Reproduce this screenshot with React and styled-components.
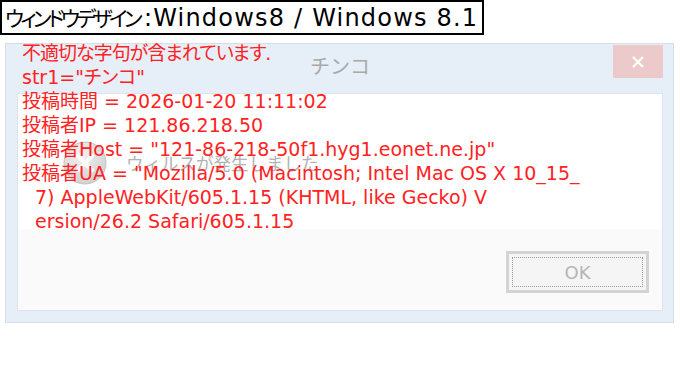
import React from "react";
import styled, { createGlobalStyle } from "styled-components";

const GlobalStyle = createGlobalStyle`
  html, body { margin: 0; padding: 0; background: #ffffff; }
  body { font-family: "DejaVu Sans", "Noto Sans CJK JP", sans-serif; }
`;

const Page = styled.div`
  position: relative;
  width: 680px;
  height: 368px;
  overflow: hidden;
`;

const Label = styled.div`
  display: inline-flex;
  align-items: center;
  box-sizing: border-box;
  height: 35px;
  padding: 0 4px 0 3px;
  border: 2px solid #000;
  font-family: "DejaVu Sans", "Noto Sans CJK JP", sans-serif;
  font-size: 24px;
  line-height: 1;
  color: #000;
  white-space: nowrap;
`;

const Kana = styled.span`
  font-family: "Noto Sans CJK JP", sans-serif;
  font-size: 21px;
  font-feature-settings: "palt";
  letter-spacing: -3.6px;
  margin-right: 5px;
`;

const Latin = styled.span`
  letter-spacing: 1.2px;
`;

const Dialog = styled.div`
  box-sizing: border-box;
  margin: 8px 0 0 5px;
  width: 669px;
  height: 280px;
  background: #e6eef8;
  border: 1px solid #d5dde7;
  padding: 0 10px 11px 11px;
  display: flex;
  flex-direction: column;
`;

const TitleBar = styled.div`
  height: 49px;
  display: grid;
  grid-template-columns: 1fr auto 1fr;
  align-items: start;
`;

const Title = styled.div`
  grid-column: 2;
  margin-top: 12px;
  font-family: "Noto Sans CJK JP", sans-serif;
  font-size: 20px;
  color: #a9a9a9;
  line-height: 1;
`;

const CloseButton = styled.div`
  grid-column: 3;
  justify-self: end;
  margin-top: 1px;
  width: 50px;
  height: 33px;
  background: #ecc9ca;
  display: flex;
  align-items: center;
  justify-content: center;
`;

const Body = styled.div`
  flex: 1;
  display: flex;
  flex-direction: column;
  background: #fafafa;
  border: 1px solid #dde3ea;
`;

const Message = styled.div`
  height: 135px;
  background: #ffffff;
  display: flex;
  align-items: center;
  gap: 18px;
  padding-left: 44px;
  padding-top: 2px;
  box-sizing: border-box;
`;

const MessageText = styled.div`
  font-family: "Noto Sans CJK JP", sans-serif;
  font-size: 17.5px;
  color: #b3b3b3;
`;

const Footer = styled.div`
  flex: 1;
  display: flex;
  justify-content: flex-end;
  align-items: flex-end;
  padding: 0 13px 17px 0;
`;

const OkButton = styled.div`
  box-sizing: border-box;
  width: 143px;
  height: 42px;
  border: 3px solid #d3d3d3;
  background: #f5f5f5;
  padding: 3px;
  display: flex;
`;

const FocusRing = styled.div`
  flex: 1;
  border: 1px dotted #9a9a9a;
  display: flex;
  align-items: center;
  justify-content: center;
  font-family: "DejaVu Sans", sans-serif;
  font-size: 18px;
  color: #b5b5b5;
`;

const Overlay = styled.div`
  position: absolute;
  left: 22px;
  top: 41px;
  color: #ff2222;
  font-family: "DejaVu Sans", "Noto Sans CJK JP", sans-serif;
  font-size: 19px;
  line-height: 24px;
  white-space: pre;
  font-feature-settings: "palt";
`;

const Line = styled.div`
  padding-left: ${(p) => (p.$cont ? "13px" : "0")};
  letter-spacing: ${(p) => (p.$tight ? "-1px" : "normal")};
`;

function ErrorIcon() {
  return (
    <svg width="46" height="46" viewBox="0 0 46 46">
      <defs>
        <radialGradient id="g" cx="40%" cy="30%" r="75%">
          <stop offset="0" stopColor="#f2f2f2" />
          <stop offset="1" stopColor="#cfcfcf" />
        </radialGradient>
      </defs>
      <circle cx="23" cy="23" r="21" fill="url(#g)" stroke="#c4c4c4" />
      <path d="M16 16 L30 30 M30 16 L16 30" stroke="#ffffff" strokeWidth="4" strokeLinecap="round" />
    </svg>
  );
}

const lines = [
  { t: "不適切な字句が含まれています.", tight: true },
  { t: 'str1="チンコ"' },
  { t: "投稿時間 = 2026-01-20 11:11:02" },
  { t: "投稿者IP = 121.86.218.50" },
  { t: '投稿者Host = "121-86-218-50f1.hyg1.eonet.ne.jp"' },
  { t: '投稿者UA = "Mozilla/5.0 (Macintosh; Intel Mac OS X 10_15_' },
  { t: "7) AppleWebKit/605.1.15 (KHTML, like Gecko) V", c: true },
  { t: "ersion/26.2 Safari/605.1.15", c: true },
];

export default function App() {
  return (
    <Page>
      <GlobalStyle />
      <Label>
        <Kana>ウィンドウデザイン</Kana>
        <Latin>:Windows8 / Windows 8.1</Latin>
      </Label>
      <Dialog>
        <TitleBar>
          <Title>チンコ</Title>
          <CloseButton>
            <svg width="14" height="12" viewBox="0 0 14 12">
              <path d="M2 1 L12 11 M12 1 L2 11" stroke="#ffffff" strokeWidth="2.2" />
            </svg>
          </CloseButton>
        </TitleBar>
        <Body>
          <Message>
            <ErrorIcon />
            <MessageText>ウィルスが発生しました</MessageText>
          </Message>
          <Footer>
            <OkButton>
              <FocusRing>OK</FocusRing>
            </OkButton>
          </Footer>
        </Body>
      </Dialog>
      <Overlay>
        {lines.map((l, i) => (
          <Line key={i} $cont={l.c} $tight={l.tight}>
            {l.t}
          </Line>
        ))}
      </Overlay>
    </Page>
  );
}
